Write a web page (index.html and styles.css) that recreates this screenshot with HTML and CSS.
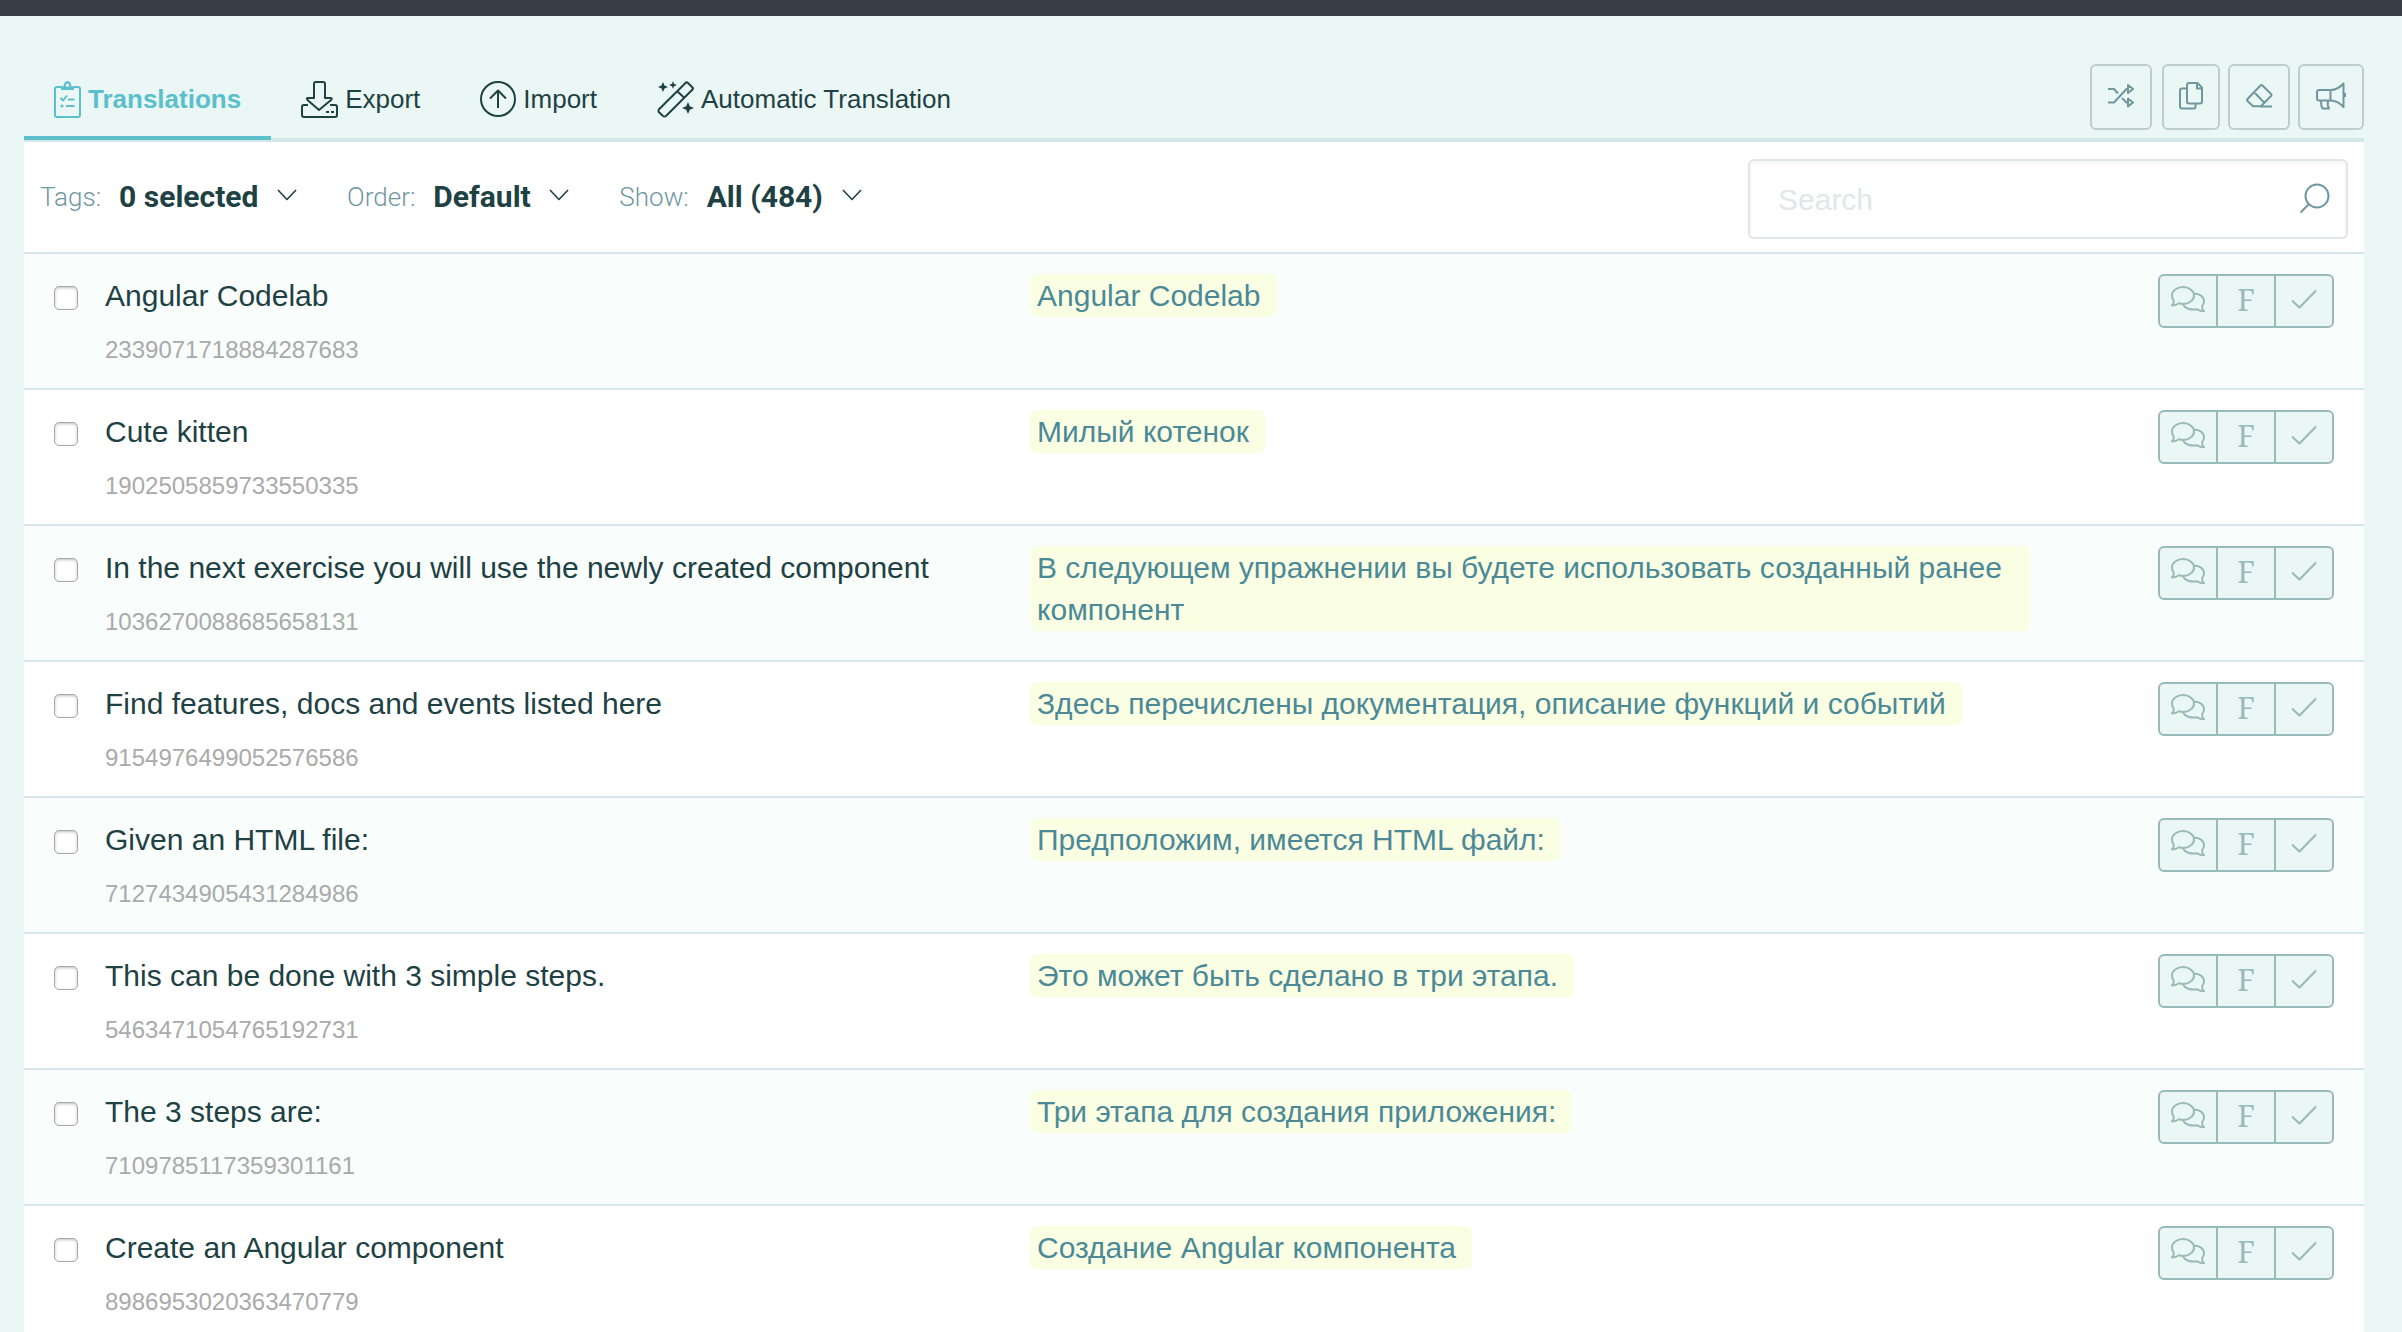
FILE: index.html
```html
<!DOCTYPE html>
<html lang="en">
<head>
<meta charset="utf-8">
<title>Translations</title>
<link rel="stylesheet" href="styles.css">
</head>
<body>
<svg class="sprite" aria-hidden="true">
  <symbol id="chat" viewBox="0 0 34 26">
    <path d="M12 1C18 1 23 4.700 23 9.500S18 18 12 18C10.500 18 9 17.700 8 17.300C6 19 3.500 19.500 1 19.500C2.500 18 3 16.500 2.800 14.500C1.500 13 1 11.500 1 9.500C1 4.700 6 1 12 1Z"/>
    <path d="M23 7.500C29 7.500 33 11 33 15.500C33 17.500 32.300 19 31 20.300C31 22.300 31.800 24 33 25.200C30.500 25.200 28 24.700 26 23.200C20 24.500 13.500 22.500 12 18"/>
  </symbol>
  <symbol id="check" viewBox="0 0 26 20">
    <path d="M1 11.500L8.500 18.500L25 1.500"/>
  </symbol>
  <symbol id="chevron" viewBox="0 0 20 12">
    <path d="M1 1L10 10.500L19 1"/>
  </symbol>
</svg>

<div class="topbar"></div>
<main class="page">
  <header class="head">
    <nav class="tabs">
      <a class="tab tab-active" href="#translations">
        <svg class="icon" width="27" height="37" viewBox="0 0 27 37"><path d="M8 6H3Q1 6 1 8V34Q1 36 3 36H24Q26 36 26 34V8Q26 6 24 6H19"/><path class="solid" d="M7 9V5.500H9.500C9.500 3 11 0 13.500 0S17.500 3 17.500 5.500H20V9ZM13.500 2.500A1.800 1.800 0 1 0 13.500 6.100A1.800 1.800 0 1 0 13.500 2.500Z"/><path d="M6.500 17L9 19.500L13 14.500M14 18.500H20.500M12 25H20.500"/><circle class="solid" cx="8" cy="25" r="1.500"/></svg>
        Translations</a>
      <a class="tab" href="#export">
        <svg class="icon" width="37" height="37" viewBox="0 0 37 37"><path d="M7 24H3Q1 24 1 26V34Q1 36 3 36H34Q36 36 36 34V26Q36 24 34 24H29"/><path d="M15 1H22Q24 1 24 3V17H29Q32 17 30 19L18 29L6.500 19Q5 17 7 17H13V3Q13 1 15 1Z"/><path d="M25 31H28M30 31H33"/></svg>
        Export</a>
      <a class="tab" href="#import">
        <svg class="icon" width="36" height="36" viewBox="0 0 36 36"><circle cx="18" cy="18" r="17"/><path d="M18 27V10M10 17.500L18 9.500L26 17.500"/></svg>
        Import</a>
      <a class="tab" href="#automatic">
        <svg class="icon" width="37" height="37" viewBox="0 0 37 37"><path d="M29 1.500Q30 1 31 2L35.500 6.500Q36.500 7.500 35.500 8.500L9 35Q7.500 36 6 35L1.800 31Q1 29.500 1.800 28.500ZM20.500 10.500L27 16.500"/><path class="solid" d="M6 1L7.500 4.500L11 6L7.500 7.500L6 11L4.500 7.500L1 6L4.500 4.500ZM16 0L17 2.800L20 4L17 5.200L16 8L15 5.200L12 4L15 2.800ZM31 21L32.800 25.200L37 27L32.800 28.800L31 33L29.200 28.800L25 27L29.200 25.200Z"/></svg>
        Automatic Translation</a>
    </nav>
    <div class="tools">
      <button class="tool" type="button" aria-label="Shuffle"><svg class="icon" width="26" height="24" viewBox="0 0 26 24"><path d="M0 5H6L10 9.500M0 18.500H6L18.500 5H20M14 14L18.500 18.500H20M20 1V9L25 5ZM20 14.500V22.500L25 18.500Z"/></svg></button>
      <button class="tool" type="button" aria-label="Copy"><svg class="icon" width="22" height="28" viewBox="1 0 22 28"><path d="M8 6.500H3Q1 6.500 1 8.500V24.500Q1 26.500 3 26.500H15Q16.500 26.500 16.500 24.500V21.500M10 1H18.500L23 5.500V19.500Q23 21.500 21 21.500H10Q8 21.500 8 19.500V3Q8 1 10 1ZM18 1V6.500H23"/></svg></button>
      <button class="tool" type="button" aria-label="Erase"><svg class="icon" width="26" height="24" viewBox="0 0 26 24"><path d="M14.500 1.500Q15.500 .500 16.500 1.500L25 10Q26 11 25 12L15 22.300H7L1.500 17Q.500 16 1.500 15ZM8.500 8.500L18 18.500M14 22.500H26"/></svg></button>
      <button class="tool" type="button" aria-label="Announce"><svg class="icon" width="30" height="28" viewBox="0 0 30 28"><path d="M3 8H14.500C19 8 24 5.500 27.500 1.500V25C24 21 19 18.500 14.500 18.500H3Q1 18.500 1 16.500V10Q1 8 3 8ZM14.500 8V18.500M5 18.500C5 22 5 24 6.500 26.500H13C11.500 24 11.500 21 12 18.500M29 11V15"/></svg></button>
    </div>
  </header>

  <section class="panel">
    <form class="filters">
      <div class="filter"><label for="tags">Tags:</label><span class="pick"><select id="tags"><option>0 selected</option></select><svg class="chevron"><use href="#chevron"/></svg></span></div>
      <div class="filter"><label for="order">Order:</label><span class="pick"><select id="order"><option>Default</option></select><svg class="chevron"><use href="#chevron"/></svg></span></div>
      <div class="filter"><label for="show">Show:</label><span class="pick"><select id="show"><option>All (484)</option></select><svg class="chevron"><use href="#chevron"/></svg></span></div>
      <div class="search">
        <input type="search" placeholder="Search" aria-label="Search">
        <svg class="icon" width="32" height="32" viewBox="0 0 32 32"><circle cx="19" cy="13" r="11.500"/><path d="M11 21L2.500 29.500"/></svg>
      </div>
    </form>

    <ul class="rows">
      <li class="row"><input type="checkbox" id="r1"><div class="source"><label for="r1">Angular Codelab</label><span class="key">2339071718884287683</span></div><div class="target"><span class="value">Angular Codelab</span></div><div class="actions"><button type="button" aria-label="Comments"><svg class="chat"><use href="#chat"/></svg></button><button type="button">F</button><button type="button" aria-label="Approve"><svg class="check"><use href="#check"/></svg></button></div></li>
      <li class="row"><input type="checkbox" id="r2"><div class="source"><label for="r2">Cute kitten</label><span class="key">1902505859733550335</span></div><div class="target"><span class="value">Милый котенок</span></div><div class="actions"><button type="button" aria-label="Comments"><svg class="chat"><use href="#chat"/></svg></button><button type="button">F</button><button type="button" aria-label="Approve"><svg class="check"><use href="#check"/></svg></button></div></li>
      <li class="row"><input type="checkbox" id="r3"><div class="source"><label for="r3">In the next exercise you will use the newly created component</label><span class="key">1036270088685658131</span></div><div class="target"><span class="value">В следующем упражнении вы будете использовать созданный ранее компонент</span></div><div class="actions"><button type="button" aria-label="Comments"><svg class="chat"><use href="#chat"/></svg></button><button type="button">F</button><button type="button" aria-label="Approve"><svg class="check"><use href="#check"/></svg></button></div></li>
      <li class="row"><input type="checkbox" id="r4"><div class="source"><label for="r4">Find features, docs and events listed here</label><span class="key">9154976499052576586</span></div><div class="target"><span class="value">Здесь перечислены документация, описание функций и событий</span></div><div class="actions"><button type="button" aria-label="Comments"><svg class="chat"><use href="#chat"/></svg></button><button type="button">F</button><button type="button" aria-label="Approve"><svg class="check"><use href="#check"/></svg></button></div></li>
      <li class="row"><input type="checkbox" id="r5"><div class="source"><label for="r5">Given an HTML file:</label><span class="key">7127434905431284986</span></div><div class="target"><span class="value">Предположим, имеется HTML файл:</span></div><div class="actions"><button type="button" aria-label="Comments"><svg class="chat"><use href="#chat"/></svg></button><button type="button">F</button><button type="button" aria-label="Approve"><svg class="check"><use href="#check"/></svg></button></div></li>
      <li class="row"><input type="checkbox" id="r6"><div class="source"><label for="r6">This can be done with 3 simple steps.</label><span class="key">5463471054765192731</span></div><div class="target"><span class="value">Это может быть сделано в три этапа.</span></div><div class="actions"><button type="button" aria-label="Comments"><svg class="chat"><use href="#chat"/></svg></button><button type="button">F</button><button type="button" aria-label="Approve"><svg class="check"><use href="#check"/></svg></button></div></li>
      <li class="row"><input type="checkbox" id="r7"><div class="source"><label for="r7">The 3 steps are:</label><span class="key">7109785117359301161</span></div><div class="target"><span class="value">Три этапа для создания приложения:</span></div><div class="actions"><button type="button" aria-label="Comments"><svg class="chat"><use href="#chat"/></svg></button><button type="button">F</button><button type="button" aria-label="Approve"><svg class="check"><use href="#check"/></svg></button></div></li>
      <li class="row"><input type="checkbox" id="r8"><div class="source"><label for="r8">Create an Angular component</label><span class="key">8986953020363470779</span></div><div class="target"><span class="value">Создание Angular компонента</span></div><div class="actions"><button type="button" aria-label="Comments"><svg class="chat"><use href="#chat"/></svg></button><button type="button">F</button><button type="button" aria-label="Approve"><svg class="check"><use href="#check"/></svg></button></div></li>
    </ul>
  </section>
</main>
</body>
</html>
```
FILE: styles.css
```css
* { box-sizing: border-box; }

html { height: 100%; overflow: hidden; }

body {
  margin: 0;
  height: 100%;
  overflow: hidden;
  background: #ebf7f5;
  color: #1e4144;
  font-family: "Liberation Sans", Arial, sans-serif;
}

svg { overflow: visible; fill: none; stroke: currentColor; stroke-width: 2; stroke-linejoin: round; flex: none; }
.solid { fill: currentColor; fill-rule: evenodd; stroke: none; }
.sprite { display: none; }

.topbar { height: 16px; background: #383e46; }

.page { padding: 48px 38px 0 24px; }

.head {
  display: flex;
  justify-content: space-between;
  align-items: flex-start;
  height: 78px;
  border-bottom: 4px solid #d5e6e8;
}

.tabs { display: flex; }

.tab {
  display: flex;
  align-items: center;
  gap: 7px;
  height: 76px;
  padding: 0 30px 2px;
  border-bottom: 4px solid transparent;
  color: inherit;
  font-size: 26px;
  text-decoration: none;
}

.tab-active { border-color: #5cbfcc; color: #5cbfcc; font-weight: bold; }

.tools { display: flex; gap: 8px; }

.tool {
  height: 66px;
  padding: 0 16px;
  border: 2px solid #bccfcc;
  border-radius: 6px;
  background: transparent;
  color: #70979f;
}

.tool:first-child { margin-right: 2px; }

.panel { background: #fff; }

.filters {
  display: flex;
  align-items: center;
  gap: 50px;
  height: 112px;
  padding: 4px 16px 0;
  border-bottom: 2px solid #d5e6e8;
}

.filter { display: flex; align-items: center; gap: 18px; padding-bottom: 6px; }
.filter label { padding-top: 2px; color: #70979f; font: 300 26px Roboto, sans-serif; }

.pick { display: grid; align-items: center; }
.pick > * { grid-area: 1 / 1; }

.pick select {
  appearance: none;
  padding: 0 38px 0 0;
  border: 0;
  background: none;
  color: inherit;
  font: bold 30px Roboto, sans-serif;
}

.chevron { justify-self: end; width: 20px; height: 12px; margin-bottom: 2px; stroke-width: 1.6; pointer-events: none; }

.search {
  display: flex;
  align-items: center;
  width: 600px;
  height: 80px;
  margin-left: auto;
  padding: 0 16px 0 28px;
  border: 2px solid #dfe8e6;
  border-radius: 6px;
  box-shadow: inset 0 2px 4px #0000000d;
  color: #70979f;
}

.search input {
  flex: 1;
  min-width: 0;
  padding: 2px 0 0;
  border: 0;
  background: none;
  font: 30px "Liberation Sans", Arial, sans-serif;
}

.search input::placeholder { color: #dfe8e6; }

.rows { margin: 0; padding: 0; list-style: none; }

.row {
  display: grid;
  grid-template-columns: 81px minmax(0, 37fr) minmax(0, 40fr) 334px;
  align-items: start;
  min-height: 136px;
  padding-top: 20px;
  border-bottom: 2px solid #d5e6e8;
  font-size: 30px;
  line-height: 42px;
}

.row:nth-child(odd) { background: #f9fdfc; }

.row input {
  appearance: none;
  width: 24px;
  height: 24px;
  margin: 12px 0 0 30px;
  border: 1px solid #aaa;
  border-radius: 5px;
  background: #fff;
  box-shadow: inset 0 1px 3px #00000040;
}

.source { display: flex; flex-direction: column; gap: 13px; padding-top: 1px; }
.key { margin-bottom: -4px; color: #aaa; font-size: 24px; line-height: 40px; }

.target { color: #4c8997; }

.value {
  display: inline-block;
  padding: 1px 16px 0 7px;
  border-radius: 6px;
  background: #faffe4;
}

.actions { display: flex; justify-self: end; margin-right: 30px; }

.actions button {
  display: grid;
  place-items: center;
  width: 60px;
  height: 54px;
  padding: 0 0 4px;
  border: 2px solid #98babb;
  background: #ebf7f5;
  color: #98babb;
  font: 30px "Noto Serif", "Liberation Serif", serif;
}

.actions button + button { margin-left: -2px; }
.actions button:first-child { border-radius: 6px 0 0 6px; }
.actions button:last-child { border-radius: 0 6px 6px 0; }
.chat { width: 34px; height: 26px; }
.check { width: 26px; height: 20px; }
```
